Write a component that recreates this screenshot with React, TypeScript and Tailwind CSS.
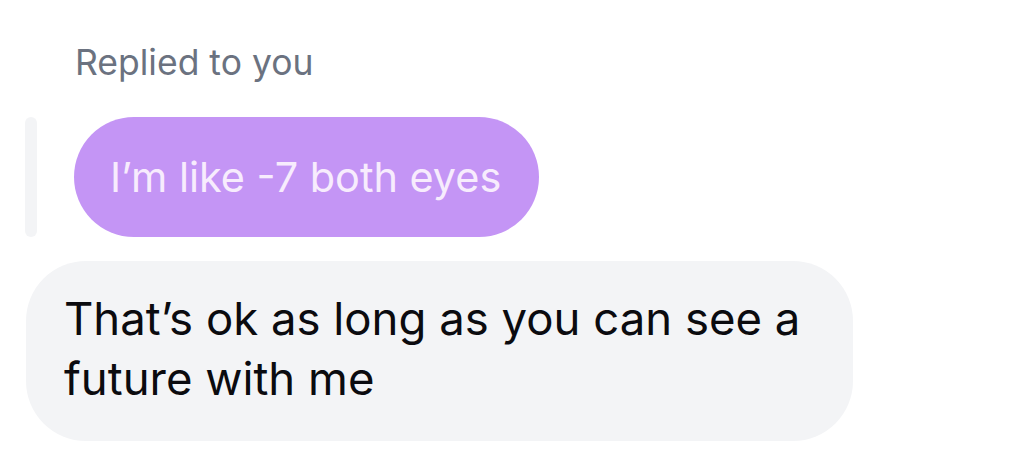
export default function App() {
  return (
    <div className="h-[456px] w-[1036px] bg-white font-['Inter',sans-serif]">
      <div className="pl-[75px] pt-[43px] text-[35.5px] leading-[40px] text-[#6b7280]">
        Replied to you
      </div>
      <div className="mt-[34px] flex items-stretch gap-[37px] pl-[25px]">
        <div className="w-[12px] rounded-full bg-[#f3f4f6]" />
        <div className="flex h-[120px] items-center rounded-full bg-[#c495f5] pl-[36px] pr-[38px] text-[41.4px] text-[#f7ecfd]">
          I’m like -7 both eyes
        </div>
      </div>
      <div className="mt-[24px] pl-[26px]">
        <div className="w-[827px] rounded-[60px] bg-[#f3f4f6] px-[38px] pt-[28px] pb-[32px] text-[45.5px] leading-[60px] text-[#0b0b0f]">
          That’s ok as long as you can see a future with me
        </div>
      </div>
    </div>
  );
}
